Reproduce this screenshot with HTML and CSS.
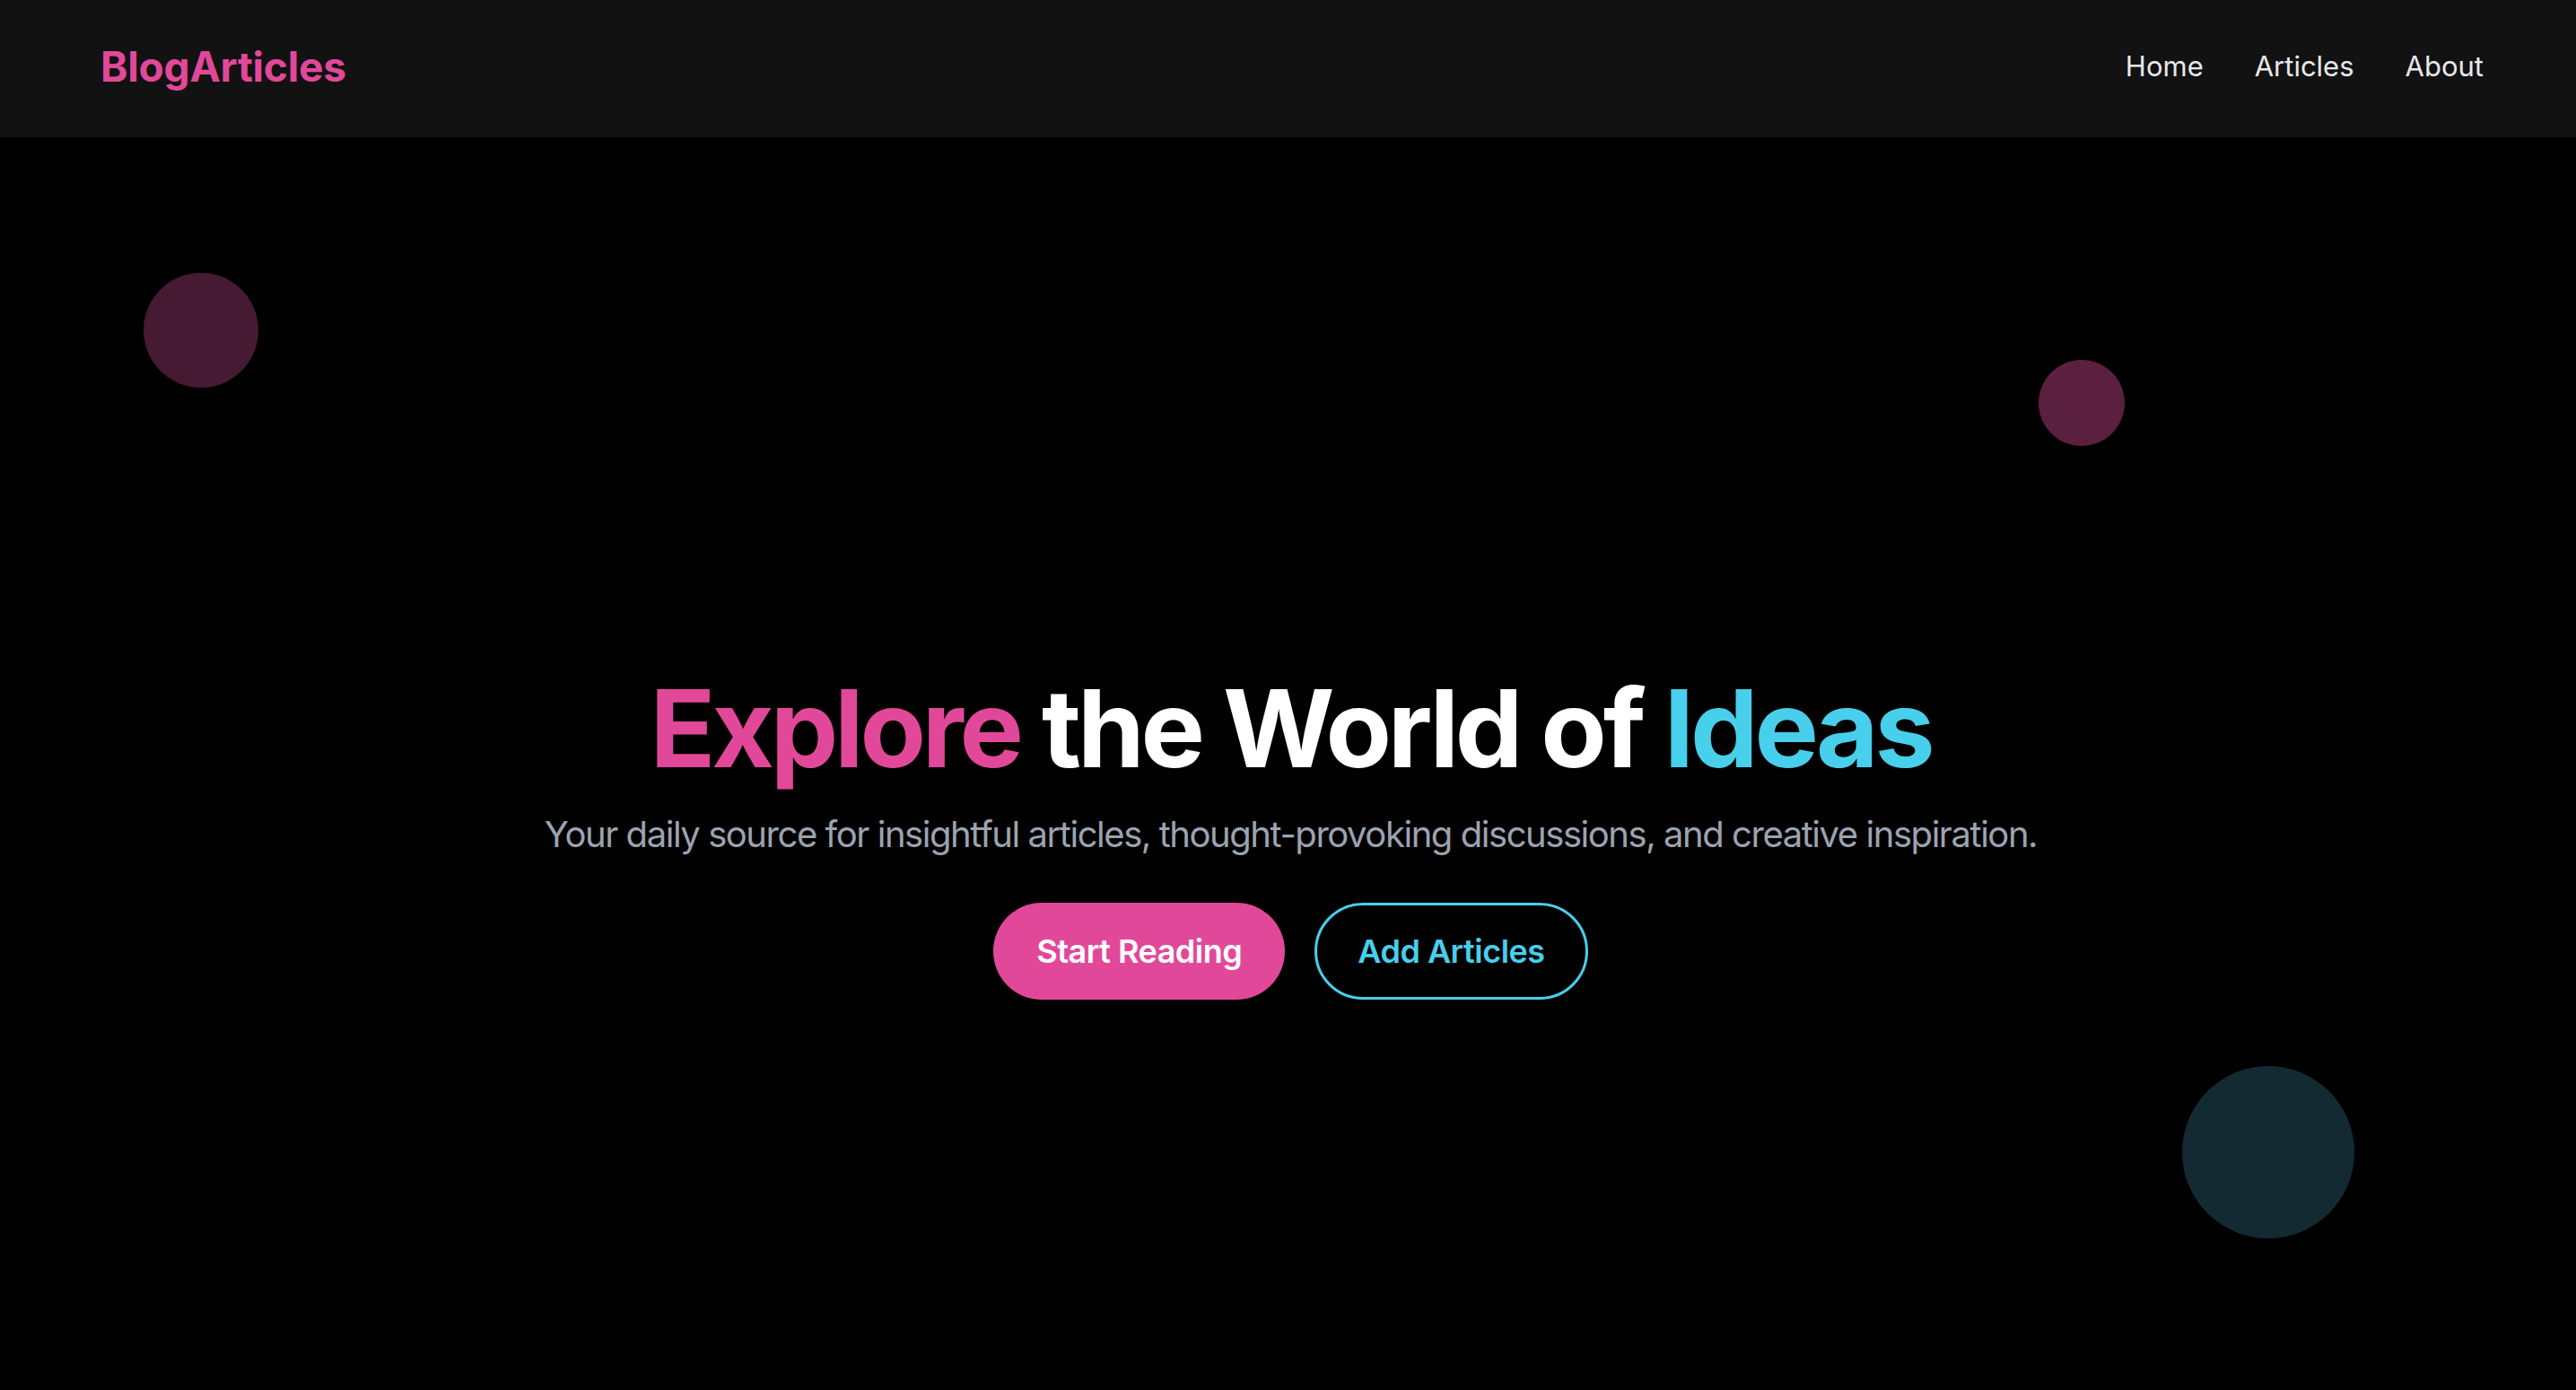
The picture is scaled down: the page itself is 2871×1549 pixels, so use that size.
FILE: index.html
```html
<!DOCTYPE html>
<html lang="en">
<head>
<meta charset="utf-8">
<title>BlogArticles</title>
<link rel="stylesheet" href="styles.css">
</head>
<body>
<header class="site-header">
  <a class="logo" href="#">BlogArticles</a>
  <nav class="nav">
    <a href="#">Home</a>
    <a href="#">Articles</a>
    <a href="#">About</a>
  </nav>
</header>
<main class="hero">
  <span class="blob blob-a"></span>
  <span class="blob blob-b"></span>
  <span class="blob blob-c"></span>
  <div class="hero-content">
    <h1 class="headline"><span class="pink">Explore</span> the World of <span class="cyan">Ideas</span></h1>
    <p class="lead">Your daily source for insightful articles, thought-provoking discussions, and creative inspiration.</p>
    <div class="actions">
      <a class="btn btn-primary" href="#">Start Reading</a>
      <a class="btn btn-outline" href="#">Add Articles</a>
    </div>
  </div>
</main>
</body>
</html>
```
FILE: styles.css
```css
* { box-sizing: border-box; }
html, body { margin: 0; padding: 0; }
body {
  background: #000;
  color: #fff;
  font-family: Inter, "Noto Sans", "Liberation Sans", sans-serif;
}
a { text-decoration: none; color: inherit; }

.site-header {
  height: 153px;
  background: #121212;
  display: flex;
  align-items: center;
  justify-content: space-between;
  padding: 0 103px 6px 112px;
}
.logo {
  font-size: 46px;
  font-weight: 700;
  letter-spacing: -0.2px;
  color: #e2489a;
}
.nav {
  display: flex;
  gap: 57px;
}
.nav a {
  font-size: 31px;
  color: #e8e8ec;
}

.hero {
  position: relative;
  min-height: 1549px;
  display: flex;
  align-items: center;
  justify-content: center;
  overflow: hidden;
}
.blob {
  position: absolute;
  border-radius: 50%;
}
.blob-a { width: 128px; height: 128px; left: 160px; top: 151px; background: #461a33; }
.blob-b { width: 96px; height: 96px; left: 2272px; top: 248px; background: #5b1f3f; }
.blob-c { width: 192px; height: 192px; left: 2432px; top: 1035px; background: #132a32; }

.hero-content {
  position: relative;
  text-align: center;
  padding-top: 10px;
  padding-left: 6px;
}
.headline {
  margin: 0 0 30px;
  font-size: 120px;
  line-height: 1;
  font-weight: 700;
  letter-spacing: -4.2px;
}
.pink { color: #e2489a; }
.cyan { color: #47cfeb; }
.lead {
  margin: 0 0 48px;
  font-size: 40px;
  line-height: 56px;
  letter-spacing: -1.45px;
  color: #9ca3af;
}
.actions {
  display: flex;
  justify-content: center;
  gap: 33px;
}
.btn {
  display: inline-flex;
  align-items: center;
  justify-content: center;
  height: 108px;
  padding: 0 48px;
  border-radius: 999px;
  font-size: 36px;
  font-weight: 600;
  letter-spacing: -0.5px;
}
.btn-primary { background: #e2489a; color: #fff; }
.btn-outline { border: 3px solid #47cfeb; color: #47cfeb; padding: 0 45px; }
```
